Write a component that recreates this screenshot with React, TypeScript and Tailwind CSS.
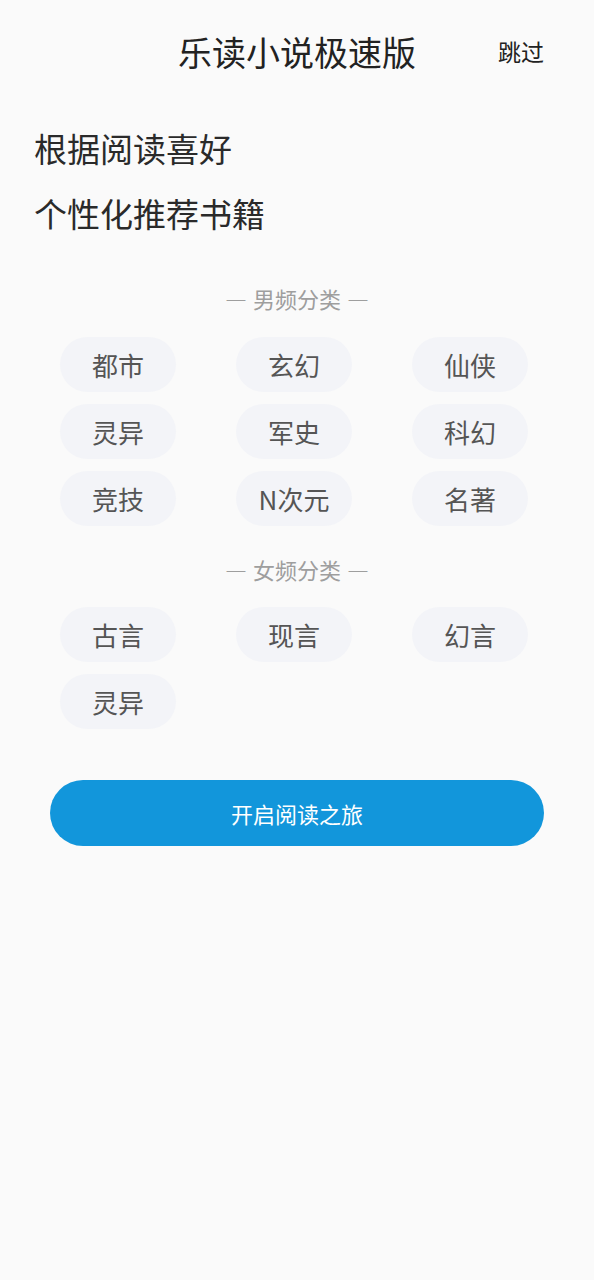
import React from 'react';

const male = ['都市', '玄幻', '仙侠', '灵异', '军史', '科幻', '竞技', 'N次元', '名著'];
const female = ['古言', '现言', '幻言', '灵异'];

function SectionTitle({ text }: { text: string }) {
  return (
    <div className="flex justify-center gap-[6px] text-[22px] leading-[30px] text-[#9e9e9e]">
      <span className="[font-feature-settings:'fwid']">—</span>
      <span>{text}</span>
      <span className="[font-feature-settings:'fwid']">—</span>
    </div>
  );
}

function TagGrid({ tags }: { tags: string[] }) {
  return (
    <div className="grid grid-cols-[116px_116px_116px] gap-x-[60px] gap-y-[12px] px-[60px]">
      {tags.map((t, i) => (
        <div
          key={i}
          className="h-[55px] rounded-full bg-[#f3f4f8] flex items-center justify-center text-[26px] text-[#555555]"
        >
          {t}
        </div>
      ))}
    </div>
  );
}

export default function App() {
  return (
    <main
      className="min-h-[1280px] w-full bg-[#fafafa]"
      style={{ fontFamily: '"Noto Sans CJK SC", "Noto Sans", sans-serif' }}
    >
      <header className="h-[102px] grid grid-cols-[1fr_auto_1fr] items-center">
        <div />
        <h1 className="text-[34px] text-[#222222] font-normal">乐读小说极速版</h1>
        <div className="flex justify-end pr-[50px]">
          <span className="text-[23px] text-[#222222]">跳过</span>
        </div>
      </header>

      <div className="pt-[14px] px-[34px] text-[33px] leading-[65px] text-[#2a2a2a]">
        <p>根据阅读喜好</p>
        <p>个性化推荐书籍</p>
      </div>

      <div className="mt-[37px]">
        <SectionTitle text="男频分类" />
      </div>
      <div className="mt-[24px]">
        <TagGrid tags={male} />
      </div>

      <div className="mt-[28px]">
        <SectionTitle text="女频分类" />
      </div>
      <div className="mt-[23px]">
        <TagGrid tags={female} />
      </div>

      <div className="mt-[51px] px-[50px]">
        <button className="w-full h-[66px] rounded-full bg-[#1296db] text-white text-[22px]">
          开启阅读之旅
        </button>
      </div>
    </main>
  );
}
